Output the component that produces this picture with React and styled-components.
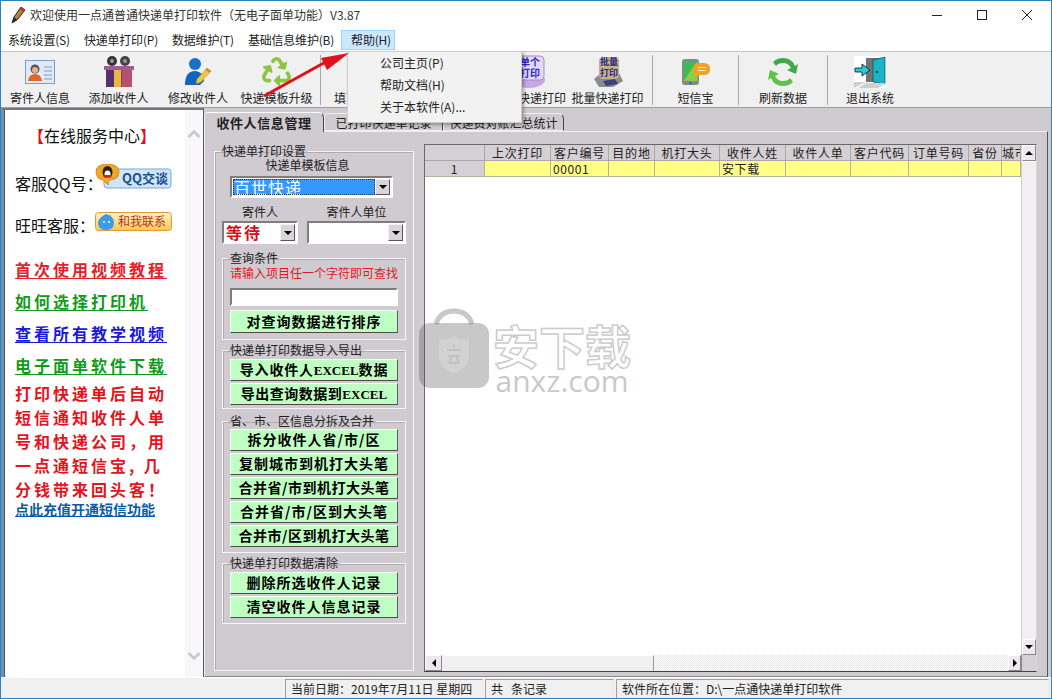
import React from "react";
import styled, { createGlobalStyle } from "styled-components";
import { FaRecycle } from "react-icons/fa";

const Global = createGlobalStyle`
  html, body { margin: 0; padding: 0; background: #fff; }
  body { font-family: "Noto Sans CJK SC", "Liberation Sans", sans-serif; font-size: 12px; color: #1a1a1a; }
  * { box-sizing: border-box; }
`;

const Window = styled.div`
  position: relative; width: 1052px; height: 699px; overflow: hidden;
  display: flex; flex-direction: column; background: #fff;
  border: 1px solid #2b82bd;
`;
const TitleBar = styled.div`
  height: 28px; display: flex; align-items: center; padding-left: 9px; background: #fff; flex: none;
`;
const TitleText = styled.span`
  margin-left: 4px; font-size: 12px; color: #333; letter-spacing: 0; flex: 1; line-height: 16px;
`;
const WinControls = styled.div`
  display: flex; height: 28px; align-items: center; padding-right: 17px; gap: 31px; color: #222;
`;
const MenuBar = styled.div`
  height: 22px; display: flex; align-items: center; background: #fff; padding-left: 7px; flex: none;
`;
const MenuItem = styled.div`
  height: 20px; line-height: 19px; font-size: 12px; color: #222; white-space: nowrap; letter-spacing: -.2px;
  margin-right: ${p => p.$mr ?? 14}px;
  ${p => p.$active && `background:#cce8ff;border:1px solid #99d1ff;padding:0 3px 0 9px;margin-left:-7px;line-height:18px;`}
`;
const ToolBar = styled.div`
  height: 57px; flex: none; display: flex; background: #f0f0f0;
  border-top: 1px solid #c6c6c6; border-bottom: 1px solid #a0a0a0;
`;
const ToolItem = styled.div`
  width: ${p => p.$w}px; flex: none; display: flex; flex-direction: column; align-items: center; padding-top: 3px;
`;
const ToolIcon = styled.div`
  height: 33px; display: flex; align-items: center; justify-content: center; color: #8cc63e;
`;
const ToolLabel = styled.div`
  margin-top: 2px; font-size: 12px; line-height: 16px; color: #222; white-space: nowrap;
`;
const ToolSep = styled.div`
  width: 11px; flex: none; display: flex; justify-content: center; padding: 3px 0 2px;
  &::before { content: ""; width: 1px; background: #a8a8a8; }
`;

const Main = styled.div`
  flex: 1; display: flex; min-height: 0; background: #d0cbd0;
`;
const SidePanel = styled.div`
  width: 203px; flex: none; display: flex; background: #f8f8fb;
  border-left: 3px solid #6d93b3; border-top: 2px solid #77757a; border-right: 1px solid #5a5a5a;
  box-shadow: inset 1px 0 0 #555;
`;
const SideContent = styled.div`
  width: 180px; flex: none; background: #fff; margin-left: 1px; padding: 13px 0 0 10px;
`;
const ServiceTitle = styled.div`
  margin-left: 13px; height: 24px; line-height: 24px; font-size: 16px; color: #111; white-space: nowrap;
  b { color: #e01018; font-weight: 700; }
`;
const ContactRow = styled.div`
  height: ${p => p.$h}px; display: flex; align-items: center; font-size: 16px; color: #111; position: relative;
  margin-top: ${p => p.$mt ?? 0}px; white-space: nowrap;
`;
const ContactLabel = styled.span` width: 80px; flex: none; `;
const BadgeBtn = styled.div`
  align-self: flex-start; margin-top: ${p => p.$mt}px; width: 77px; height: ${p => p.$h}px;
`;
const LinkList = styled.div` margin-top: 8px; `;
const LinkRow = styled.div`
  height: 32px; line-height: 32px; font-size: 16px; font-weight: 700; letter-spacing: 3px; white-space: nowrap;
  color: ${p => p.$c};
  span { display: inline-block; line-height: 18px; border-bottom: 1px solid ${p => p.$c}; }
`;
const PromoText = styled.div`
  color: #e4141e; font-size: 16px; font-weight: 700; letter-spacing: 3px; line-height: 24px; white-space: nowrap;
`;
const RechargeLink = styled.div`
  color: #0a5ca8; font-size: 14px; font-weight: 700; line-height: 16px; text-decoration: underline; white-space: nowrap;
`;
const SideScroll = styled.div`
  flex: 1; display: flex; flex-direction: column; justify-content: space-between; align-items: center;
  padding: 19px 0 16px;
`;

const TabArea = styled.div`
  flex: 1; display: flex; flex-direction: column; min-width: 0; padding-top: 3px; padding-right: 3px;
`;
const TabRow = styled.div`
  height: 20px; display: flex; flex: none; align-items: flex-end; position: relative; z-index: 1;
`;
const Tab = styled.div`
  width: ${p => p.$w}px; text-align: center; font-size: ${p => p.$active ? 13 : 12}px;
  font-weight: ${p => p.$active ? 700 : 400}; color: #222; background: #d0cbd0;
  height: ${p => p.$active ? 20 : 18}px; line-height: 17px; letter-spacing: ${p => p.$active ? '.6px' : '0'};
  border-top: 1px solid ${p => p.$active ? '#fff' : '#f0eef0'}; border-left: 1px solid #f0eef0; border-right: 1px solid #444;
  border-top-left-radius: 4px; border-top-right-radius: 6px;
  ${p => !p.$active && `border-bottom: 1px solid #f0eef0;`}
  ${p => p.$active && `margin-bottom:-1px; padding-top:1px;`}
`;
const TabPage = styled.div`
  flex: 1; display: flex; background: #d0cbd0; padding: 12px 0 3px 9px; min-height: 0;
  border-top: 1px solid #f0eef0; border-left: 1px solid #f0eef0; border-right: 1px solid #555; border-bottom: 1px solid #888;
`;

const Group = styled.fieldset`
  margin: 0; min-width: 0; flex: none;
  width: ${p => p.$w}px; height: ${p => p.$h}px; margin-top: ${p => p.$mt ?? 0}px; margin-left: ${p => p.$ml ?? 0}px;
  padding: 0 ${p => p.$px ?? 7}px;
  border: 1px solid #f6f4f6; box-shadow: inset 1px 1px 0 #aeaaae;
  display: flex; flex-direction: column;
`;
const Legend = styled.legend`
  padding: 0 2px; margin-left: ${p => p.$ml ?? -2}px; font-size: 12px; line-height: 14px; height: 14px; color: #222; white-space: nowrap;
`;
const Caption = styled.div`
  text-align: center; font-size: 12px; line-height: 14px; color: #222; white-space: nowrap;
  width: ${p => p.$w}px; margin-left: ${p => p.$ml ?? 0}px;
`;
const SenderLabels = styled.div` display: flex; margin: 7px 0 0 7px; `;
const SenderCombos = styled.div` display: flex; margin: 2px 0 0 7px; gap: 9px; `;
const Combo = styled.div`
  width: ${p => p.$w}px; height: ${p => p.$h}px; margin-left: ${p => p.$ml ?? 0}px; margin-top: ${p => p.$mt ?? 0}px;
  display: flex; flex: none; background: #fff;
  border: 2px solid; border-color: #807c80 #fff #fff #807c80; padding: 1px;
`;
const ComboValue = styled.div`
  flex: 1; background: ${p => p.$sel ? '#3399ff' : '#fff'}; color: ${p => p.$sel ? '#fff' : '#d01018'};
  font-size: 16px; font-weight: ${p => p.$sel ? 400 : 700}; letter-spacing: ${p => p.$sel ? 1 : 2}px; line-height: 16px; padding-left: 1px;
  white-space: nowrap; ${p => p.$sel && 'outline:1px dotted #333;outline-offset:-1px;'}
`;
const ComboArrow = styled.div`
  width: 15px; flex: none; background: #d8d4d8; display: flex; align-items: center; justify-content: center;
  border: 1px solid; border-color: #f4f2f4 #555 #555 #f4f2f4;
  &::after { content: ""; border-left: 4px solid transparent; border-right: 4px solid transparent; border-top: 4px solid #000; }
`;
const WarnText = styled.div`
  color: #e01a20; font-size: 12px; line-height: 14px; margin-top: 1px; white-space: nowrap;
`;
const SearchInput = styled.div`
  height: 18px; margin-top: 8px; background: #fff; border: 2px solid; border-color: #807c80 #fff #fff #807c80;
`;
const ActionBtn = styled.div`
  height: ${p => p.$h ?? 23}px; margin-top: ${p => p.$mt ?? 2}px; flex: none;
  background: #bfffc3; color: #000; font-weight: 700; font-size: 14px; letter-spacing: ${p => p.$ls ?? 1}px;
  line-height: ${p => (p.$h ?? 23) - 3}px; text-align: center; white-space: nowrap;
  border: 1px solid; border-color: #f0fff0 #5c5c5c #4a4a4a #f0fff0;
  small { font-family: "Liberation Serif", serif; font-size: 13px; font-weight: 700; letter-spacing: 0; }
`;

const DataGrid = styled.div`
  margin-left: 10px; width: 613px; display: flex; flex-direction: column; background: #fff; flex: none; height: 528px;
  border: 1px solid; border-color: #6a686a #d8d4d8 #444 #6a686a;
`;
const GridBody = styled.div` flex: 1; display: flex; min-height: 0; `;
const GridTable = styled.div` width: 596px; flex: none; overflow: hidden; `;
const GridRow = styled.div` display: flex; height: ${p => p.$h}px; `;
const HeadCell = styled.div`
  width: ${p => p.$w}px; flex: none; background: #d4d0d4; border-right: 1px solid #aaa7aa; border-bottom: 1px solid #aaa7aa;
  text-align: center; font-size: 12px; line-height: 15px; letter-spacing: .8px; white-space: nowrap; overflow: hidden; color: #222;
`;
const DataCell = styled.div`
  width: ${p => p.$w}px; flex: none; background: ${p => p.$fixed ? '#d4d0d4' : '#ffff88'}; border-right: 1px solid #b4b19c; border-bottom: 1px solid #b4b19c;
  text-align: ${p => p.$fixed ? 'center' : 'left'}; font-size: 12px; line-height: 15px; padding-left: ${p => p.$fixed ? 0 : 2}px; letter-spacing: .6px; white-space: nowrap; overflow: hidden; color: #222;
`;
const VScroll = styled.div`
  width: 15px; flex: none; display: flex; flex-direction: column; background: #f0f0f0; border-left: 1px solid #d0d0d0;
`;
const VThumb = styled.div` flex: 1; background: #f0f0f0; border-top: 1px solid #fff; `;
const ScrollBtn = styled.div`
  flex: none; width: ${p => p.$w ?? 'auto'}; height: ${p => p.$h ?? 16}px; background: #ece9ec; display: flex; align-items: center; justify-content: center;
  border: 1px solid; border-color: #fff #8a888a #8a888a #fff;
  &::after { content: ""; border: 4px solid transparent;
    ${p => p.$dir === 'up' && 'border-bottom-color:#000;border-top-width:0;'}
    ${p => p.$dir === 'down' && 'border-top-color:#000;border-bottom-width:0;'}
    ${p => p.$dir === 'left' && 'border-right-color:#000;border-left-width:0;'}
    ${p => p.$dir === 'right' && 'border-left-color:#000;border-right-width:0;'}
  }
`;
const HScroll = styled.div` height: 16px; flex: none; display: flex; `;
const HThumb = styled.div` width: 212px; background: #f0f0f0; border-right: 1px solid #999; border-top: 1px solid #fff; `;
const HTrack = styled.div`
  flex: 1; background: repeating-conic-gradient(#e6e6e6 0 25%, #fff 0 50%) 0 0 / 2px 2px;
`;
const Corner = styled.div` width: 15px; background: #d4d0d4; border-left: 1px solid #888; flex: none; `;

const StatusBar = styled.div`
  height: 21px; flex: none; display: flex; background: #f0f0f0; border-top: 1px solid #fff; position: relative; padding-left: 284px;
`;
const StatusCell = styled.div`
  width: ${p => p.$w ? p.$w + 'px' : 'auto'}; flex: ${p => p.$w ? 'none' : 1}; margin-right: 2px; margin-top: 1px;
  border-left: 1px solid #a0a0a0; border-top: 1px solid #a0a0a0; border-right: 1px solid #e8e8e8;
  padding-left: 5px; font-size: 12px; line-height: 18px; color: #222; white-space: nowrap;
`;

/* overlays */
const PopupMenu = styled.div`
  position: absolute; left: 346px; top: 50px; width: 175px; height: 72px; background: #f2f2f2; z-index: 5;
  border: 1px solid #cfcfcf; box-shadow: 2px 2px 3px rgba(0,0,0,.3);
`;
const PopupItem = styled.div`
  height: 22px; line-height: 22px; padding-left: 32px; font-size: 12px; color: #222; white-space: nowrap;
`;
const ArrowLayer = styled.svg` position: absolute; left: 250px; top: 45px; z-index: 6; `;
const Watermark = styled.div`
  position: absolute; left: 417px; top: 307px; z-index: 4; display: flex; gap: 2px; pointer-events: none;
`;
const WmText = styled.div` display: flex; flex-direction: column; align-items: center; padding-top: 11px; width: 140px; `;
const WmCn = styled.div`
  font-size: 46px; font-weight: 700; line-height: 50px; color: #fff; -webkit-text-stroke: 1.5px #ccc; white-space: nowrap; height: 50px;
`;
const WmEn = styled.div`
  font-family: "Open Sans", sans-serif; font-size: 30px; line-height: 24px; color: #c9c9c9; white-space: nowrap;
`;

const Pen = () => (
  <svg width="16" height="20" viewBox="0 0 16 20">
    <path d="M2 18 L4 12 L11 2 L15 5 L8 14 Z" fill="#a8843a" stroke="#2a2a2a" strokeWidth="1" />
    <path d="M11 2 L15 5 L13.500 7 L9.500 4 Z" fill="#c03030" />
    <path d="M2 18 L4 12 L7 15 Z" fill="#222" />
  </svg>
);
const IdCard = () => (
  <svg width="30" height="24" viewBox="0 0 30 24">
    <rect x=".5" y=".5" width="29" height="23" fill="#dfe9f7" stroke="#7e9cc6" />
    <circle cx="10" cy="9" r="4.500" fill="#555" />
    <circle cx="10" cy="10" r="3" fill="#eab08c" />
    <path d="M3 21 Q4 14 10 14 Q16 14 17 21 Z" fill="#e0662a" />
    <path d="M19 7h8M19 11h8M19 15h8M19 19h8" stroke="#7e9cc6" />
  </svg>
);
const GiftPeople = () => (
  <svg width="32" height="34" viewBox="0 0 32 34">
    <circle cx="9" cy="6" r="5" fill="#333" /><circle cx="22" cy="6" r="5" fill="#444" />
    <circle cx="9" cy="6" r="2" fill="#999" /><circle cx="22" cy="6" r="2" fill="#999" />
    <rect x="3" y="12" width="26" height="20" fill="#7a3f88" />
    <rect x="3" y="12" width="13" height="20" fill="#57306c" />
    <rect x="11" y="12" width="7" height="20" fill="#e6b93a" />
    <rect x="19" y="12" width="10" height="20" fill="#b8506c" />
    <rect x="1" y="11" width="30" height="4" fill="#a25a98" />
  </svg>
);
const BluePerson = () => (
  <svg width="28" height="30" viewBox="0 0 28 30">
    <circle cx="11" cy="7" r="6" fill="#1a70c8" />
    <path d="M1 28 Q1 14 11 14 Q19 14 20 24 L16 28 Z" fill="#1264b8" />
    <path d="M13 22 L23 11 L27 14 L17 25 L12 27 Z" fill="#f0c840" stroke="#b88a20" strokeWidth=".5" />
    <path d="M23 11 L27 14 L25.500 16 L21.500 13 Z" fill="#e08040" />
  </svg>
);
const SinglePrint = () => (
  <svg width="34" height="34" viewBox="0 0 34 34">
    <ellipse cx="15" cy="25" rx="17" ry="8" fill="#c9a7e6" />
    <rect x="-2" y="1" width="33" height="24" rx="4" fill="#e6d8f6" stroke="#a58ac8" />
    <text x="17" y="11" fontSize="10" fontWeight="700" fill="#2a2ac0" textAnchor="middle">单个</text>
    <text x="17" y="22" fontSize="10" fontWeight="700" fill="#2a2ac0" textAnchor="middle">打印</text>
  </svg>
);
const BatchPrint = () => (
  <svg width="34" height="34" viewBox="0 0 34 34">
    <path d="M3 24 L10 18 H28 L32 26 L22 32 H8 Z" fill="#8a8a90" />
    <rect x="8" y="2" width="20" height="22" rx="4" fill="#c8b088" />
    <path d="M12 26 L24 24 L27 29 L15 31 Z" fill="#3a4080" />
    <text x="18" y="10" fontSize="9" fontWeight="700" fill="#2a2a90" textAnchor="middle">批量</text>
    <text x="18" y="21" fontSize="9" fontWeight="700" fill="#2a2a90" textAnchor="middle">打印</text>
  </svg>
);
const PhoneBubble = () => (
  <svg width="30" height="28" viewBox="0 0 30 28">
    <rect x="1" y="1" width="17" height="26" rx="3" fill="#888" />
    <rect x="2.500" y="3" width="14" height="20" fill="#3cba5a" />
    <path d="M2.500 23 L16.500 3 V23 Z" fill="#8ad040" />
    <circle cx="9.500" cy="25" r="1.200" fill="#1a6ac0" />
    <path d="M12 11 Q12 5 19 5 H23 Q29 5 29 11 Q29 17 23 17 H18 L13 20 L14 16 Q12 14 12 11 Z" fill="#f4a020" />
    <path d="M17 9.500h8M17 12.500h8" stroke="#fff2c0" strokeWidth="1.200" />
  </svg>
);
const RefreshIcon = () => (
  <svg width="32" height="32" viewBox="0 0 32 32" fill="#3eaa4a">
    <path d="M16 2 A13 13 0 0 1 28 10 L31 8 L29 18 L20 14 L24 12 A9 9 0 0 0 16 7 Q11 7 9 10 L6 6 Q10 2 16 2 Z" />
    <path d="M16 30 A13 13 0 0 1 4 22 L1 24 L3 14 L12 18 L8 20 A9 9 0 0 0 16 25 Q21 25 23 22 L26 26 Q22 30 16 30 Z" fill="#5fc24a" />
  </svg>
);
const ExitDoor = () => (
  <svg width="32" height="32" viewBox="0 0 32 32">
    <rect width="32" height="32" fill="#fff" />
    <path d="M12 2 H28 V26 H12 Z" fill="#6f7378" />
    <path d="M19 4 L31 1 V28 L19 26 Z" fill="#19b5c4" stroke="#064a50" strokeWidth=".7" />
    <circle cx="23" cy="16" r="1" fill="#111" />
    <path d="M1 12 H8 V8 L16 14 L8 20 V16 H1 Z" fill="#22d0dc" stroke="#111" strokeWidth=".8" />
    <path d="M0 26 H12 L0 32 Z M12 27 L32 27 L24 32 H4 Z" fill="#cfcfcf" />
  </svg>
);
const Chevron = ({ up }) => (
  <svg width="14" height="10" viewBox="0 0 14 10" fill="none" stroke="#c6c8cc" strokeWidth="2.600">
    <path d={up ? "M1.500 8 L7 2.500 L12.500 8" : "M1.500 2 L7 7.500 L12.500 2"} />
  </svg>
);
const QQBadge = () => (
  <svg width="77" height="25" viewBox="0 0 77 25">
    <rect x="9" y="5" width="67" height="19" rx="3" fill="#cfe6f8" stroke="#7ba8d0" />
    <path d="M1 8 Q1 0 12 0 Q24 0 24 8 Q24 16 14 16 L13 21 L8 16 Q1 15 1 8 Z" fill="#f0a820" stroke="#b87410" strokeWidth=".6" />
    <ellipse cx="12.500" cy="8" rx="5" ry="6" fill="#222" />
    <ellipse cx="12.500" cy="10" rx="3" ry="3.500" fill="#fff" />
    <path d="M8 11 H17 L16 13.500 H9 Z" fill="#d02020" />
    <text x="50" y="19" fontSize="13" fontWeight="700" fill="#20508c" textAnchor="middle">QQ交谈</text>
  </svg>
);
const WangBadge = () => (
  <svg width="77" height="20" viewBox="0 0 77 20">
    <defs>
      <linearGradient id="wg" x1="0" y1="0" x2="0" y2="1"><stop offset="0" stopColor="#fff0c8" /><stop offset="1" stopColor="#ffc850" /></linearGradient>
    </defs>
    <rect x=".5" y=".5" width="76" height="18" rx="3" fill="url(#wg)" stroke="#e09840" />
    <path d="M11 2 Q19 4 19 11 Q19 18 11 18 Q3 18 3 11 Q3 6 11 2 Z" fill="#3c9ae8" />
    <circle cx="9" cy="10" r="1" fill="#fff" /><circle cx="14" cy="10" r="1" fill="#fff" />
    <text x="47" y="14" fontSize="12" fill="#b03818" textAnchor="middle">和我联系</text>
  </svg>
);
const Bag = () => (
  <svg width="72" height="82" viewBox="0 0 72 82">
    <path d="M18 16 Q22 3 36 3 Q50 3 54 16" fill="none" stroke="#c8c8c8" strokeWidth="5" />
    <rect x="1" y="15" width="70" height="65" rx="11" fill="#4a4a4a" fillOpacity=".3" />
    <path d="M21 31 Q30 33 36 28 Q42 33 51 31 V50 Q50 60 36 66 Q22 60 21 50 Z" fill="#d8d8d8" fillOpacity=".6" />
    <path d="M29 42h14M36 36v3M30 48h12M31 55h10M34 48l-3 7M38 48l3 7" stroke="#bdbdbd" strokeWidth="1.500" fill="none" />
  </svg>
);

const COLS = [
  ["", 60], ["上次打印", 66], ["客户编号", 58], ["目的地", 46], ["机打大头", 65], ["收件人姓", 66],
  ["收件人单", 65], ["客户代码", 58], ["订单号码", 60], ["省份", 33], ["城市", 19],
];
const ROW = { 0: "1", 2: "00001", 5: "安下载" };

const TOOLS = [
  [78, <IdCard />, "寄件人信息"], [79, <GiftPeople />, "添加收件人"], [80, <BluePerson />, "修改收件人"], [77, <FaRecycle size={29} />, "快递模板升级"], "sep",
  [76, null, "填写快递单"], [90, null, ""], [76, <SinglePrint />, "单个快递打印"], [79, <BatchPrint />, "批量快递打印"], "sep",
  [75, <PhoneBubble />, "短信宝"], "sep", [78, <RefreshIcon />, "刷新数据"], "sep", [74, <ExitDoor />, "退出系统"],
];

export default function App() {
  return (
    <Window>
      <Global />
      <TitleBar>
        <Pen />
        <TitleText>欢迎使用一点通普通快递单打印软件（无电子面单功能）V3.87</TitleText>
        <WinControls>
          <svg width="14" height="14" viewBox="0 0 14 14"><path d="M2 7.500h10" stroke="#222" /></svg>
          <svg width="14" height="14" viewBox="0 0 14 14"><rect x="2.500" y="2.500" width="9" height="9" fill="none" stroke="#222" /></svg>
          <svg width="14" height="14" viewBox="0 0 14 14"><path d="M2 2l10 10M12 2L2 12" stroke="#222" /></svg>
        </WinControls>
      </TitleBar>
      <MenuBar>
        <MenuItem>系统设置(S)</MenuItem>
        <MenuItem>快递单打印(P)</MenuItem>
        <MenuItem>数据维护(T)</MenuItem>
        <MenuItem>基础信息维护(B)</MenuItem>
        <MenuItem $active>帮助(H)</MenuItem>
      </MenuBar>
      <ToolBar>
        {TOOLS.map((t, i) => t === "sep" ? <ToolSep key={i} /> : (
          <ToolItem key={i} $w={t[0]}>
            <ToolIcon>{t[1]}</ToolIcon>
            <ToolLabel>{t[2]}</ToolLabel>
          </ToolItem>
        ))}
      </ToolBar>
      <Main>
        <SidePanel>
          <SideContent>
            <ServiceTitle><b>【</b>在线服务中心<b>】</b></ServiceTitle>
            <ContactRow $h={40} $mt={16}>
              <ContactLabel>客服QQ号：</ContactLabel>
              <BadgeBtn $mt={1} $h={25}><QQBadge /></BadgeBtn>
            </ContactRow>
            <ContactRow $h={40} $mt={2}>
              <ContactLabel>旺旺客服：</ContactLabel>
              <BadgeBtn $mt={7} $h={20}><WangBadge /></BadgeBtn>
            </ContactRow>
            <LinkList>
              <LinkRow $c="#e4202a"><span>首次使用视频教程</span></LinkRow>
              <LinkRow $c="#129a1c"><span>如何选择打印机</span></LinkRow>
              <LinkRow $c="#1a1ad8"><span>查看所有教学视频</span></LinkRow>
              <LinkRow $c="#129a1c"><span>电子面单软件下载</span></LinkRow>
            </LinkList>
            <PromoText>
              打印快递单后自动<br />短信通知收件人单<br />号和快递公司，用<br />一点通短信宝, 几<br />分钱带来回头客！
            </PromoText>
            <RechargeLink>点此充值开通短信功能</RechargeLink>
          </SideContent>
          <SideScroll><Chevron up /><Chevron /></SideScroll>
        </SidePanel>
        <TabArea>
          <TabRow>
            <Tab $w={120} $active>收件人信息管理</Tab>
            <Tab $w={119}>已打印快递单记录</Tab>
            <Tab $w={121}>快递费对账汇总统计</Tab>
          </TabRow>
          <TabPage>
            <Group $w={200} $h={527} $px={0}>
              <Legend $ml={5}>快递单打印设置</Legend>
              <Caption $w={185}>快递单模板信息</Caption>
              <Combo $w={163} $h={22} $ml={15} $mt={4}>
                <ComboValue $sel>百世快递</ComboValue>
                <ComboArrow />
              </Combo>
              <SenderLabels>
                <Caption $w={76}>寄件人</Caption>
                <Caption $w={99} $ml={9}>寄件人单位</Caption>
              </SenderLabels>
              <SenderCombos>
                <Combo $w={76} $h={23}><ComboValue>等待</ComboValue><ComboArrow /></Combo>
                <Combo $w={99} $h={23}><ComboValue /><ComboArrow /></Combo>
              </SenderCombos>
              <Group $w={184} $h={89} $ml={7} $mt={7}>
                <Legend>查询条件</Legend>
                <WarnText>请输入项目任一个字符即可查找</WarnText>
                <SearchInput />
                <ActionBtn $mt={4}>对查询数据进行排序</ActionBtn>
              </Group>
              <Group $w={184} $h={66} $ml={7} $mt={3}>
                <Legend>快递单打印数据导入导出</Legend>
                <ActionBtn $h={22} $mt={2} $ls={.8}>导入收件人<small>EXCEL</small>数据</ActionBtn>
                <ActionBtn $h={22} $ls={.5}>导出查询数据到<small>EXCEL</small></ActionBtn>
              </Group>
              <Group $w={184} $h={139} $ml={7} $mt={5}>
                <Legend>省、市、区信息分拆及合并</Legend>
                <ActionBtn $h={22} $mt={1}>拆分收件人省/市/区</ActionBtn>
                <ActionBtn $h={22}>复制城市到机打大头笔</ActionBtn>
                <ActionBtn $h={22} $ls={.5}>合并省/市到机打大头笔</ActionBtn>
                <ActionBtn $h={22}>合并省/市/区到大头笔</ActionBtn>
                <ActionBtn $h={22} $ls={.5}>合并市/区到机打大头笔</ActionBtn>
              </Group>
              <Group $w={184} $h={68} $ml={7} $mt={3}>
                <Legend>快递单打印数据清除</Legend>
                <ActionBtn $h={22} $mt={2}>删除所选收件人记录</ActionBtn>
                <ActionBtn $h={22}>清空收件人信息记录</ActionBtn>
              </Group>
            </Group>
            <DataGrid>
              <GridBody>
                <GridTable>
                  <GridRow $h={16}>
                    {COLS.map(([n, w], i) => <HeadCell key={i} $w={w}>{n}</HeadCell>)}
                  </GridRow>
                  <GridRow $h={16}>
                    {COLS.map(([, w], i) => <DataCell key={i} $w={w} $fixed={i === 0}>{ROW[i] ?? ""}</DataCell>)}
                  </GridRow>
                </GridTable>
                <VScroll>
                  <ScrollBtn $dir="up" />
                  <VThumb />
                  <ScrollBtn $dir="down" />
                </VScroll>
              </GridBody>
              <HScroll>
                <ScrollBtn $dir="left" $w="17px" />
                <HThumb />
                <HTrack />
                <ScrollBtn $dir="right" $w="13px" />
                <Corner />
              </HScroll>
            </DataGrid>
          </TabPage>
        </TabArea>
      </Main>
      <StatusBar>
        <StatusCell $w={198}>当前日期：2019年7月11日 星期四</StatusCell>
        <StatusCell $w={129}>共&nbsp;&nbsp;&nbsp;条记录</StatusCell>
        <StatusCell>软件所在位置：D:\一点通快递单打印软件</StatusCell>
      </StatusBar>
      <PopupMenu>
        <PopupItem>公司主页(P)</PopupItem>
        <PopupItem>帮助文档(H)</PopupItem>
        <PopupItem>关于本软件(A)...</PopupItem>
      </PopupMenu>
      <ArrowLayer width="110" height="60" viewBox="0 0 110 60">
        <path d="M13 50 L80 13" stroke="#e2101c" strokeWidth="3" />
        <path d="M98 7 L70 12 L76 24 Z" fill="#e2101c" />
      </ArrowLayer>
      <Watermark>
        <Bag />
        <WmText>
          <WmCn>安下载</WmCn>
          <WmEn>anxz.com</WmEn>
        </WmText>
      </Watermark>
    </Window>
  );
}
